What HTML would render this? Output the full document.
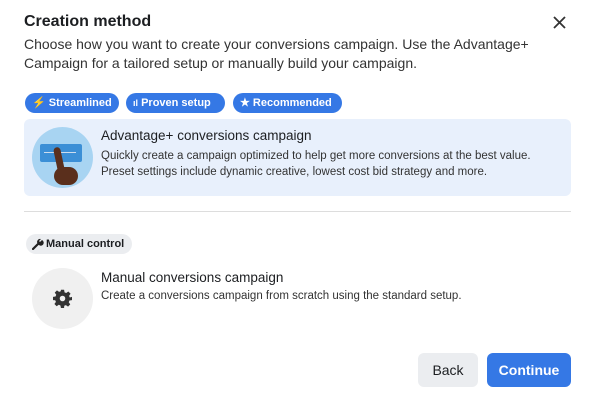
<!DOCTYPE html>
<html><head><style>
*{margin:0;padding:0;box-sizing:border-box}
body{width:600px;height:407px;background:#fff;font-family:"Liberation Sans",sans-serif;color:#1c1e21;position:relative;overflow:hidden}
.a{position:absolute;white-space:nowrap}
.pill{position:absolute;top:93px;height:20px;border-radius:10px;background:#3578e5;color:#fff;font-size:11px;font-weight:bold;line-height:20px;padding:0 0 0 7px;white-space:nowrap;overflow:hidden}
</style></head><body>
<div class="a" style="left:24px;top:13px;font-size:16px;font-weight:bold">Creation method</div>
<svg class="a" style="left:553px;top:16px" width="13" height="13" viewBox="0 0 13 13"><path d="M1 1L12 12M12 1L1 12" stroke="#333" stroke-width="1.8"/></svg>
<div class="a" style="left:24px;top:35px;font-size:14px;line-height:19px;color:#333;width:560px;white-space:normal">Choose how you want to create your conversions campaign. Use the Advantage+ Campaign for a tailored setup or manually build your campaign.</div>
<div class="pill" style="left:25px;width:94px">⚡ Streamlined</div>
<div class="pill" style="left:126px;width:99px"><span style="font-size:9px">ıl</span> Proven setup</div>
<div class="pill" style="left:233px;width:109px">★ Recommended</div>
<div class="a" style="left:24px;top:119px;width:547px;height:77px;background:#e8f0fc;border-radius:6px"></div>
<div class="a" style="left:32px;top:127px;width:61px;height:61px;border-radius:50%;background:#a8d4f2;overflow:hidden">
<div class="a" style="left:8px;top:17px;width:42px;height:18px;background:#3b8fd6;border-radius:2px"></div>
<div class="a" style="left:12px;top:25px;width:32px;height:1px;background:#cde"></div>
<div class="a" style="left:24px;top:20px;width:7px;height:30px;background:#5a2f1c;border-radius:4px;transform:rotate(-12deg)"></div>
<div class="a" style="left:22px;top:40px;width:24px;height:18px;background:#5a2f1c;border-radius:9px"></div>
</div>
<div class="a" style="left:101px;top:128px;font-size:13.5px;color:#1c1e21">Advantage+ conversions campaign</div>
<div class="a" style="left:101px;top:148px;font-size:11.5px;line-height:16px;color:#333">Quickly create a campaign optimized to help get more conversions at the best value.<br>Preset settings include dynamic creative, lowest cost bid strategy and more.</div>
<div class="a" style="left:24px;top:211px;width:547px;height:1px;background:#ddd"></div>
<div class="a" style="left:26px;top:234px;width:106px;height:20px;border-radius:10px;background:#ebedf0;font-size:11px;font-weight:bold;line-height:20px;padding-left:20px">Manual control</div>
<svg class="a" style="left:32px;top:238px" width="12" height="12" viewBox="0 0 12 12"><path d="M1 11L6 6" stroke="#222" stroke-width="2.2" stroke-linecap="round"/><path d="M6 6a3 3 0 1 0 4-4l-2 2-1-1 2-2a3 3 0 0 0-3 5z" fill="#222"/></svg>
<div class="a" style="left:32px;top:268px;width:61px;height:61px;border-radius:50%;background:#f0f0f0"></div>
<svg class="a" style="left:53px;top:289px" width="19" height="19" viewBox="0 0 24 24"><path fill="#333" d="M10 1h4l.6 3.2 2.1.9 2.7-1.9 2.8 2.8-1.9 2.7.9 2.1L24 10v4l-3.2.6-.9 2.1 1.9 2.7-2.8 2.8-2.7-1.9-2.1.9L14 24h-4l-.6-3.2-2.1-.9-2.7 1.9-2.8-2.8 1.9-2.7-.9-2.1L0 14v-4l3.2-.6.9-2.1L2.2 4.6 5 1.8l2.7 1.9 2.1-.9zM12 8.5a3.5 3.5 0 1 0 0 7 3.5 3.5 0 0 0 0-7z"/></svg>
<div class="a" style="left:101px;top:270px;font-size:13.5px">Manual conversions campaign</div>
<div class="a" style="left:101px;top:290px;font-size:11.5px;color:#333">Create a conversions campaign from scratch using the standard setup.</div>
<div class="a" style="left:418px;top:353px;width:60px;height:34px;border-radius:6px;background:#ebedf0;font-size:14px;line-height:34px;text-align:center">Back</div>
<div class="a" style="left:487px;top:353px;width:84px;height:34px;border-radius:6px;background:#3578e5;color:#fff;font-weight:bold;font-size:14px;line-height:34px;text-align:center">Continue</div>
</body></html>
